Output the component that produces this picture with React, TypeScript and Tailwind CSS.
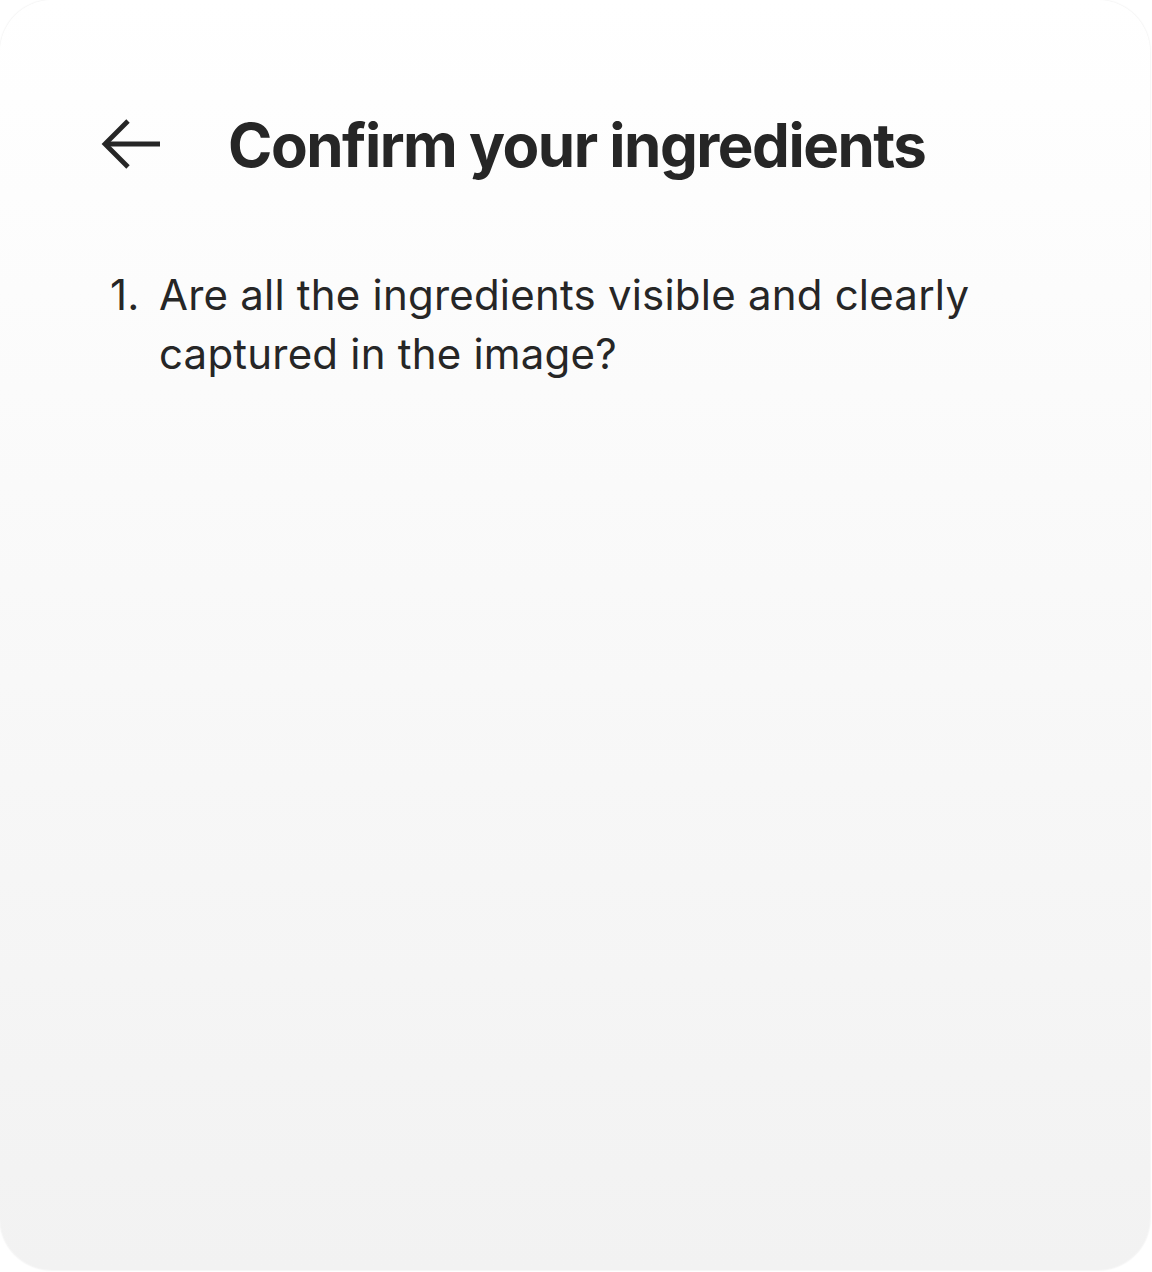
import React from "react";

export default function App() {
  return (
    <div className="w-[1152px] h-[1272px] bg-white" style={{ fontFamily: "Inter, 'Noto Sans', sans-serif" }}>
      <div className="w-[1150px] h-[1270px] rounded-[52px] bg-gradient-to-b from-white to-[#f2f2f2] shadow-[0_0_2px_rgba(0,0,0,0.12)] pt-[113px] pl-[101px] pr-[100px]">
        <div className="flex items-center h-[64px]">
          <svg width="62" height="56" viewBox="0 0 62 56" className="shrink-0 text-[#262626]">
            <path d="M4 27 H59" stroke="currentColor" strokeWidth="4.8" fill="none" />
            <path d="M27 4 L4 27 L27 50" stroke="currentColor" strokeWidth="4.8" fill="none" strokeLinejoin="miter" />
          </svg>
          <h1 className="ml-[65px] text-[60px] font-bold tracking-[-0.025em] text-[#262626] leading-none">
            Confirm your ingredients
          </h1>
        </div>
        <ol className="mt-[88px] text-[42px] leading-[59px] text-[#262626] tracking-[0.005em]">
          <li className="flex">
            <span className="w-[58px] shrink-0 pl-[9px]">1.</span>
            <span className="w-[860px]">Are all the ingredients visible and clearly captured in the image?</span>
          </li>
        </ol>
      </div>
    </div>
  );
}
